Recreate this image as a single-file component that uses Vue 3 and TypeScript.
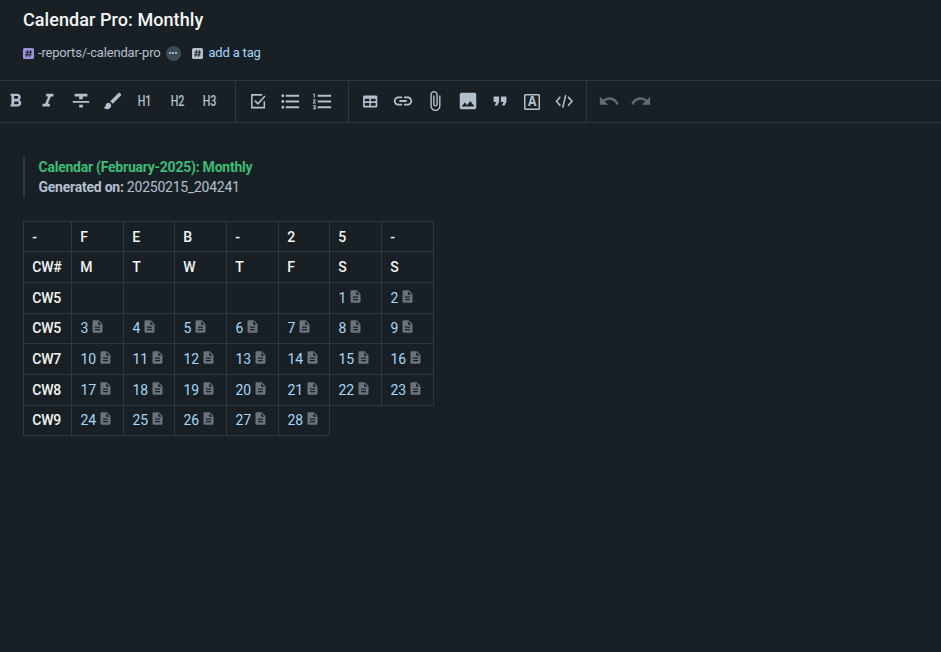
<script setup lang="ts">
interface Tool {
  name: string
  kind?: 'text' | 'stroke'
  label?: string
  path?: string
}

const groups: { id: string; tools: Tool[] }[] = [
  {
    id: 'inline',
    tools: [
      { name: 'bold', path: 'M15.6 10.79c.97-.67 1.65-1.77 1.65-2.79 0-2.26-1.75-4-4-4H6v2.2h1v9.6H6V18h8.04c2.09 0 3.71-1.7 3.71-3.79 0-1.52-.86-2.82-2.15-3.42zM10 6.5h3c.83 0 1.5.67 1.5 1.5s-.67 1.5-1.5 1.5h-3v-3zm3.5 9H10v-3h3.5c.83 0 1.5.67 1.5 1.5s-.67 1.5-1.5 1.5z' },
      { name: 'italic', path: 'M10 4v3h2.21l-3.42 8H6v3h8v-3h-2.21l3.42-8H18V4z' },
      { name: 'strike', path: 'M10 19h4v-3h-4v3zM5 4v3h5v3h4V7h5V4H5zM3 14h18v-2H3v2z' },
      { name: 'brush', path: 'M7 14c-1.66 0-3 1.34-3 3 0 1.31-1.16 2-2 2 .92 1.22 2.49 2 4 2 2.21 0 4-1.79 4-4 0-1.66-1.34-3-3-3zm13.71-9.37l-1.34-1.34c-.39-.39-1.02-.39-1.41 0L9 12.25 11.75 15l8.96-8.96c.39-.39.39-1.02 0-1.41z' },
      { name: 'h1', kind: 'text', label: 'H1' },
      { name: 'h2', kind: 'text', label: 'H2' },
      { name: 'h3', kind: 'text', label: 'H3' },
    ],
  },
  {
    id: 'lists',
    tools: [
      { name: 'task', kind: 'stroke', path: 'M16.5 5.3H5.3v13.9h13.6v-7M8.6 11.6l3.4 3.5 7.6-8.6' },
      { name: 'bullets', path: 'M4 10.5c-.83 0-1.5.67-1.5 1.5s.67 1.5 1.5 1.5 1.5-.67 1.5-1.5-.67-1.5-1.5-1.5zm0-6c-.83 0-1.5.67-1.5 1.5S3.170 7.5 4 7.5 5.5 6.830 5.5 6 4.830 4.5 4 4.5zm0 12c-.83 0-1.5.68-1.5 1.5s.68 1.5 1.5 1.5 1.5-.68 1.5-1.5-.67-1.5-1.5-1.5zM7 19h14v-2H7v2zm0-6h14v-2H7v2zm0-8v2h14V5H7z' },
      { name: 'numbers', path: 'M2 17h2v.5H3v1h1v.5H2v1h3v-4H2v1zm1-9h1V4H2v1h1v3zm-1 3h1.800L2 13.100v.9h3v-1H3.200L5 10.900V10H2v1zm5-6v2h14V5H7zm0 14h14v-2H7v2zm0-6h14v-2H7v2z' },
    ],
  },
  {
    id: 'insert',
    tools: [
      { name: 'table', path: 'M6 6h12.400a1.600 1.600 0 0 1 1.600 1.600v10a1.600 1.600 0 0 1-1.600 1.600H6a1.600 1.600 0 0 1-1.600-1.600v-10A1.600 1.600 0 0 1 6 6zm.200 3.600v2.800h5.100V9.600zm6.800 0v2.800h5.100V9.600zm-6.800 4.500v3.200h5.100v-3.200zm6.800 0v3.200h5.100v-3.200z' },
      { name: 'link', path: 'M3.900 12c0-1.710 1.390-3.100 3.100-3.100h4V7H7c-2.760 0-5 2.240-5 5s2.240 5 5 5h4v-1.900H7c-1.710 0-3.100-1.390-3.100-3.100zM8 13h8v-2H8v2zm9-6h-4v1.900h4c1.710 0 3.100 1.390 3.100 3.100s-1.390 3.100-3.100 3.100h-4V17h4c2.760 0 5-2.240 5-5s-2.240-5-5-5z' },
      { name: 'attach', path: 'M16.500 6v11.500c0 2.210-1.790 4-4 4s-4-1.790-4-4V5c0-1.380 1.120-2.500 2.500-2.500s2.500 1.120 2.500 2.500v10.500c0 .55-.45 1-1 1s-1-.45-1-1V6H10v9.500c0 1.380 1.120 2.500 2.500 2.500s2.500-1.120 2.500-2.500V5c0-2.210-1.790-4-4-4S7 2.790 7 5v12.500c0 3.040 2.460 5.500 5.500 5.500s5.500-2.460 5.500-5.500V6h-1.500z' },
      { name: 'image', path: 'M21 19V5c0-1.100-.9-2-2-2H5c-1.100 0-2 .9-2 2v14c0 1.100.9 2 2 2h14c1.100 0 2-.9 2-2zM8.500 13.500l2.500 3.010L14.500 12l4.500 6H5l3.500-4.500z' },
      { name: 'quote', path: 'M6 17h3l2-4V7H5v6h3zm8 0h3l2-4V7h-6v6h3z' },
      { name: 'font', kind: 'text', label: 'A' },
      { name: 'code', kind: 'stroke', path: 'M8 7.500L3.800 12.400 8 17.300M16.500 7.500l4.200 4.900-4.200 4.900M13.900 5.600l-3.300 13.600' },
    ],
  },
  {
    id: 'history',
    tools: [
      { name: 'undo', path: 'M12.500 8c-2.650 0-5.050.99-6.900 2.600L2 7v9h9l-3.620-3.620c1.390-1.160 3.160-1.880 5.120-1.880 3.540 0 6.550 2.310 7.600 5.500l2.370-.78C21.080 11.030 17.150 8 12.500 8z' },
      { name: 'redo', path: 'M18.400 10.600C16.550 8.990 14.150 8 11.500 8c-4.650 0-8.580 3.030-9.960 7.220L3.900 16c1.050-3.190 4.050-5.500 7.600-5.500 1.950 0 3.730.72 5.120 1.880L13 16h9V7l-3.600 3.600z' },
    ],
  },
]

const headRows: string[][] = [
  ['-', 'F', 'E', 'B', '-', '2', '5', '-'],
  ['CW#', 'M', 'T', 'W', 'T', 'F', 'S', 'S'],
]

const weeks: { label: string; short?: boolean; days: (number | null)[] }[] = [
  { label: 'CW5', days: [null, null, null, null, null, 1, 2] },
  { label: 'CW5', short: true, days: [3, 4, 5, 6, 7, 8, 9] },
  { label: 'CW7', days: [10, 11, 12, 13, 14, 15, 16] },
  { label: 'CW8', days: [17, 18, 19, 20, 21, 22, 23] },
  { label: 'CW9', short: true, days: [24, 25, 26, 27, 28] },
]
</script>

<template>
  <main class="note">
    <header class="head">
      <h1 class="title">Calendar Pro: Monthly</h1>
      <div class="tags">
        <svg class="hash violet" viewBox="0 0 11 11"><rect width="11" height="11" rx="1.500" /><path d="M4.700 2.200L3.600 8.800M7.700 2.200L6.600 8.800M2.500 4.200h6.500M2 6.800h6.500" /></svg>
        <span class="tag">-reports/-calendar-pro</span>
        <span class="more"><i></i><i></i><i></i></span>
        <svg class="hash" viewBox="0 0 11 11"><rect width="11" height="11" rx="1.500" /><path d="M4.700 2.200L3.600 8.800M7.700 2.200L6.600 8.800M2.500 4.200h6.500M2 6.800h6.500" /></svg>
        <a class="add">add a tag</a>
      </div>
    </header>

    <nav class="toolbar">
      <div v-for="group in groups" :key="group.id" class="group" :class="group.id">
        <span v-for="tool in group.tools" :key="tool.name" class="tool" :class="tool.name">
          <span v-if="tool.kind === 'text'" class="label">{{ tool.label }}</span>
          <svg v-else viewBox="0 0 24 24" :class="{ line: tool.kind === 'stroke' }"><path fill-rule="evenodd" :d="tool.path" /></svg>
        </span>
      </div>
    </nav>

    <section class="body">
      <blockquote class="quote-block">
        <p class="green">Calendar (February-2025): Monthly</p>
        <p><b>Generated on:</b> 20250215_204241</p>
      </blockquote>

      <div class="calendar">
        <template v-for="(row, r) in headRows" :key="'h' + r">
          <div v-for="(cell, c) in row" :key="c" class="cell strong">{{ cell }}</div>
        </template>
        <template v-for="(week, w) in weeks" :key="'w' + w">
          <div class="cell strong" :class="{ short: week.short }">{{ week.label }}</div>
          <div v-for="(day, d) in week.days" :key="d" class="cell" :class="{ short: week.short }">
            <template v-if="day">
              <a class="day">{{ day }}</a>
              <svg class="doc" viewBox="0 0 24 24"><path d="M14 2H6c-1.100 0-1.990.9-1.990 2L4 20c0 1.100.89 2 1.990 2H18c1.100 0 2-.9 2-2V8l-6-6zm2 16H8v-2h8v2zm0-4H8v-2h8v2zm-3-5V3.500L18.500 9H13z" /></svg>
            </template>
          </div>
        </template>
      </div>
    </section>
  </main>
</template>

<style>
body {
  background: #192025;
}
</style>

<style scoped>
.note {
  box-sizing: border-box;
  width: 941px;
  height: 652px;
  overflow: hidden;
  background: #192025;
  color: #b4bfce;
  font-family: Roboto, 'Liberation Sans', sans-serif;
  font-size: 14px;
}
.head {
  box-sizing: border-box;
  height: 80px;
  padding: 8px 23px 0;
}
.title {
  margin: 0;
  font-size: 18px;
  line-height: 24px;
  font-weight: 500;
  letter-spacing: 0.07px;
  color: #f2f5f4;
}
.tags {
  display: flex;
  align-items: center;
  height: 20px;
  margin-top: 11px;
  font-size: 13px;
  line-height: 20px;
  letter-spacing: -0.19px;
}
.hash {
  width: 11px;
  height: 11px;
  fill: #b4bfce;
}
.hash path {
  fill: none;
  stroke: #192025;
  stroke-width: 1;
}
.hash.violet {
  fill: #9a93d8;
}
.tag {
  margin: 0 5.500px 0 4px;
}
.more {
  display: flex;
  align-items: center;
  justify-content: center;
  gap: 1px;
  width: 15px;
  height: 15px;
  margin-right: 11.500px;
  border-radius: 50%;
  background: #3a4d56;
}
.more i {
  width: 2px;
  height: 2px;
  background: #9fb6c6;
}
.add {
  margin-left: 5px;
  color: #a3d8fa;
}
.toolbar {
  display: flex;
  height: 41px;
  border-top: 1px solid #2f3740;
  border-bottom: 1px solid #2f3740;
}
.group {
  display: flex;
  align-items: center;
  box-sizing: border-box;
  border-right: 1px solid #2f3740;
}
.inline { width: 236px; }
.lists { width: 113px; padding-left: 6px; }
.insert { width: 238px; padding-left: 5.500px; }
.history { padding-left: 6px; border-right-color: transparent; }
.tool {
  display: flex;
  align-items: center;
  justify-content: center;
  width: 32.3px;
  height: 40px;
  padding-bottom: 1px;
}
.tool svg {
  width: 22px;
  height: 22px;
  fill: #b4bfce;
}
.history svg {
  fill: #5f6973;
}
.tool svg.line {
  fill: none;
  stroke: #b4bfce;
  stroke-width: 1.700;
}
.table svg {
  margin-right: 2px;
}
.bullets svg,
.numbers svg {
  width: 23px;
  height: 23px;
}
.label {
  font-size: 15px;
  font-weight: 500;
  transform: scaleX(0.72);
}
.h1 .label,
.h2 .label {
  margin-right: 1px;
}
.font .label {
  box-sizing: border-box;
  width: 16px;
  height: 16px;
  margin-top: 1px;
  border: 1px solid #b4bfce;
  border-radius: 1px;
  box-shadow: inset 0 0 0 0.500px #b4bfce;
  font: 700 14px/14px 'Liberation Mono', monospace;
  text-align: center;
  transform: none;
}
.body {
  padding: 34px 23px 0;
}
.quote-block {
  margin: 0;
  height: 40px;
  padding-left: 13.500px;
  border-left: 2px solid #2f3740;
  letter-spacing: -0.24px;
}
.quote-block p {
  margin: 0;
  line-height: 20px;
}
.quote-block b {
  font-weight: 700;
}
.quote-block .green {
  font-weight: 700;
  color: #3bbd76;
}
.calendar {
  display: grid;
  grid-template-columns: 48px 52px 51px 52px 52px 51px 52px 52px;
  grid-template-rows: 30px 31px 31px 30px 31px 31px 30px;
  width: 410px;
  margin-top: 24px;
  border-top: 1px solid #2f3740;
  border-left: 1px solid #2f3740;
}
.cell {
  display: flex;
  align-items: center;
  padding-left: 8.500px;
  border-right: 1px solid #2f3740;
  border-bottom: 1px solid #2f3740;
}
.short {
  padding-bottom: 1px;
}
.strong {
  padding-left: 8.200px;
  font-weight: 500;
  letter-spacing: -0.15px;
  color: #f2f5f4;
}
.day {
  color: #a3d8fa;
}
.doc {
  width: 15px;
  height: 15px;
  margin: -3px 0 0 1.800px;
  fill: #69727d;
}
</style>
